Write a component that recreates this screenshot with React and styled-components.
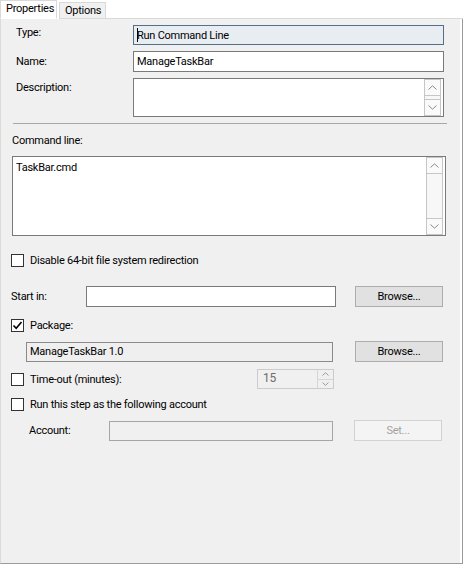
import React from 'react';
import styled, { createGlobalStyle } from 'styled-components';

const GlobalStyle = createGlobalStyle`
  html, body {
    margin: 0;
    padding: 0;
    background: #ffffff;
  }
  body {
    font-family: Roboto, "Liberation Sans", Arial, sans-serif;
    font-size: 11px;
    letter-spacing: -0.25px;
    line-height: 15px;
    color: #000000;
  }
  * { box-sizing: border-box; }
`;

const Window = styled.div`
  width: 463px;
  height: 566px;
  display: flex;
  flex-direction: column;
  background: #ffffff;
`;

const TabStrip = styled.div`
  display: flex;
  align-items: flex-end;
  height: 19px;
`;

const Tab = styled.div`
  display: flex;
  align-items: center;
  height: ${p => (p.$active ? 19 : 17)}px;
  padding: ${p => (p.$active ? '0 0 2px 5px' : '0 0 0 5px')};
  width: ${p => p.$width}px;
  margin-right: ${p => (p.$active ? 2 : 0)}px;
  background: ${p => (p.$active ? '#ffffff' : '#f0f0f0')};
  border: 1px solid #d9d9d9;
  border-bottom-color: ${p => (p.$active ? 'transparent' : '#d9d9d9')};
  white-space: nowrap;
`;

const TabFiller = styled.div`
  flex: 1;
  height: 1px;
  background: #d9d9d9;
`;

const Panel = styled.div`
  height: 545px;
  background: #f0f0f0;
  border-left: 1px solid #dadada;
  border-right: 1px solid #9b9b9b;
  border-bottom: 1px solid #9b9b9b;
  box-shadow: inset -2px 0 0 #ffffff;
  display: flex;
  flex-direction: column;
`;

const PropertyGrid = styled.div`
  display: grid;
  grid-template-columns: 117px 311px;
  row-gap: 6px;
  margin: 6px 0 0 15px;
`;

const Label = styled.div`
  padding-top: ${p => p.$top || 0}px;
  white-space: nowrap;
`;

const Field = styled.div`
  display: flex;
  align-items: center;
  height: ${p => p.$h || 20}px;
  width: ${p => (p.$w ? `${p.$w}px` : 'auto')};
  padding: 0 3px;
  background: ${p => p.$bg || '#ffffff'};
  border: 1px solid ${p => p.$border || '#7a7a7a'};
  color: ${p => p.$color || '#000000'};
  white-space: nowrap;
  overflow: hidden;
`;

const Caret = styled.span`
  display: inline-block;
  width: 1px;
  height: 14px;
  background: #000;
  margin-right: -1px;
`;

const MultiField = styled.div`
  display: flex;
  height: ${p => p.$h}px;
  width: ${p => (p.$w ? `${p.$w}px` : 'auto')};
  margin: ${p => p.$top || 0}px 0 0 ${p => p.$left || 0}px;
  background: #ffffff;
  border: 1px solid #7a7a7a;
`;

const MultiText = styled.div`
  flex: 1;
  padding: 3px 3px;
`;

const ScrollBar = styled.div`
  width: 17px;
  margin: 0 2px 0 0;
  display: flex;
  flex-direction: column;
  justify-content: space-between;
  border: 1px solid #c6c6c6;
  border-top: none;
  border-bottom: none;
  background: #f7f7f7;
`;

const ScrollButton = styled.div`
  display: flex;
  align-items: center;
  justify-content: center;
  flex: 0 0 17px;
  height: 17px;
  border: 1px solid #c6c6c6;
  border-left: none;
  border-right: none;
  background: #fafafa;
`;

const Separator = styled.div`
  margin: 6px 0 0 12px;
  width: 434px;
  height: 1px;
  background: #a8a8a8;
`;

const SectionLabel = styled.div`
  margin: ${p => p.$mt}px 0 0 ${p => p.$ml}px;
`;

const Row = styled.div`
  display: flex;
  align-items: center;
  height: ${p => p.$h || 15}px;
  width: ${p => (p.$w ? `${p.$w}px` : 'auto')};
  margin: ${p => p.$mt}px 0 0 ${p => p.$ml}px;
`;

const Box = styled.div`
  width: 13px;
  height: 13px;
  flex: 0 0 13px;
  background: #ffffff;
  border: 1px solid #333333;
  display: flex;
  align-items: center;
  justify-content: center;
`;

const CheckText = styled.span`
  margin-left: 6px;
  white-space: nowrap;
`;

const FixedLabel = styled.div`
  width: ${p => p.$w}px;
  flex: 0 0 ${p => p.$w}px;
  white-space: nowrap;
`;

const Button = styled.div`
  display: flex;
  align-items: center;
  justify-content: center;
  width: 88px;
  height: 21px;
  margin-left: ${p => p.$gap}px;
  background: ${p => (p.$disabled ? '#f4f4f4' : '#e1e1e1')};
  border: 1px solid ${p => (p.$disabled ? '#d2d2d2' : '#adadad')};
  color: ${p => (p.$disabled ? '#a3a3a3' : '#000000')};
`;

const Spinner = styled.div`
  display: flex;
  width: 77px;
  height: 20px;
  margin-left: auto;
  border: 1px solid #cccccc;
  background: #f0f0f0;
  color: #6d6d6d;
`;

const SpinValue = styled.div`
  flex: 1;
  padding: 1px 0 0 5px;
  font-size: 12px;
`;

const SpinButtons = styled.div`
  width: 16px;
  display: flex;
  flex-direction: column;
  border-left: 1px solid #d6d6d6;
`;

const SpinButton = styled.div`
  flex: 1;
  display: flex;
  align-items: center;
  justify-content: center;
  border-top: ${p => (p.$lower ? '1px solid #d6d6d6' : 'none')};
`;

const ChevronUp = ({ color = '#8c8c8c' }) => (
  <svg width="9" height="5" viewBox="0 0 9 5">
    <path d="M0.5 4.5 L4.5 0.8 L8.5 4.5" fill="none" stroke={color} strokeWidth="1" />
  </svg>
);

const ChevronDown = ({ color = '#8c8c8c' }) => (
  <svg width="9" height="5" viewBox="0 0 9 5">
    <path d="M0.5 0.5 L4.5 4.2 L8.5 0.5" fill="none" stroke={color} strokeWidth="1" />
  </svg>
);

const SmallUp = () => (
  <svg width="7" height="4" viewBox="0 0 7 4">
    <path d="M0.5 3.5 L3.5 0.7 L6.5 3.5" fill="none" stroke="#9a9a9a" strokeWidth="1" />
  </svg>
);

const SmallDown = () => (
  <svg width="7" height="4" viewBox="0 0 7 4">
    <path d="M0.5 0.5 L3.5 3.3 L6.5 0.5" fill="none" stroke="#9a9a9a" strokeWidth="1" />
  </svg>
);

const CheckMark = () => (
  <svg width="11" height="11" viewBox="0 0 11 11">
    <path d="M1.5 5.5 L4.2 8.3 L9.5 2" fill="none" stroke="#000" strokeWidth="1.6" />
  </svg>
);

const Scroller = () => (
  <ScrollBar>
    <ScrollButton><ChevronUp /></ScrollButton>
    <ScrollButton><ChevronDown /></ScrollButton>
  </ScrollBar>
);

const CheckBox = ({ checked, children }) => (
  <>
    <Box>{checked && <CheckMark />}</Box>
    <CheckText>{children}</CheckText>
  </>
);

export default function App() {
  return (
    <>
      <GlobalStyle />
      <Window>
        <TabStrip>
          <Tab $active $width={57}>Properties</Tab>
          <Tab $width={47}>Options</Tab>
          <TabFiller />
        </TabStrip>
        <Panel>
          <PropertyGrid>
            <Label $top={0}>Type:</Label>
            <Field $h={20} $bg="#e8edf2" $border="#52708c">
              <Caret />Run Command Line
            </Field>
            <Label $top={3}>Name:</Label>
            <Field $h={21}>ManageTaskBar</Field>
            <Label $top={2}>Description:</Label>
            <MultiField $h={39}>
              <MultiText />
              <Scroller />
            </MultiField>
          </PropertyGrid>

          <Separator />

          <SectionLabel $mt={9} $ml={11}>Command line:</SectionLabel>
          <MultiField $h={80} $w={434} $left={11} $top={8}>
            <MultiText>TaskBar.cmd</MultiText>
            <Scroller />
          </MultiField>

          <Row $mt={17} $ml={10}>
            <CheckBox>Disable 64-bit file system redirection</CheckBox>
          </Row>

          <Row $h={21} $mt={18} $ml={10}>
            <FixedLabel $w={75}>Start in:</FixedLabel>
            <Field $h={21} $w={250} />
            <Button $gap={19}>Browse...</Button>
          </Row>

          <Row $mt={11} $ml={10}>
            <CheckBox checked>Package:</CheckBox>
          </Row>

          <Row $h={21} $mt={8} $ml={25}>
            <Field $h={20} $w={307} $bg="#efefef" $border="#8a8a8a">ManageTaskBar 1.0</Field>
            <Button $gap={22}>Browse...</Button>
          </Row>

          <Row $h={20} $w={323} $mt={7} $ml={10}>
            <CheckBox>Time-out (minutes):</CheckBox>
            <Spinner>
              <SpinValue>15</SpinValue>
              <SpinButtons>
                <SpinButton><SmallUp /></SpinButton>
                <SpinButton $lower><SmallDown /></SpinButton>
              </SpinButtons>
            </Spinner>
          </Row>

          <Row $mt={8} $ml={10}>
            <CheckBox>Run this step as the following account</CheckBox>
          </Row>

          <Row $h={21} $mt={8} $ml={28}>
            <FixedLabel $w={80}>Account:</FixedLabel>
            <Field $h={20} $w={224} $bg="#f0f0f0" $border="#a6a6a6" />
            <Button $gap={21} $disabled>Set...</Button>
          </Row>
        </Panel>
      </Window>
    </>
  );
}
